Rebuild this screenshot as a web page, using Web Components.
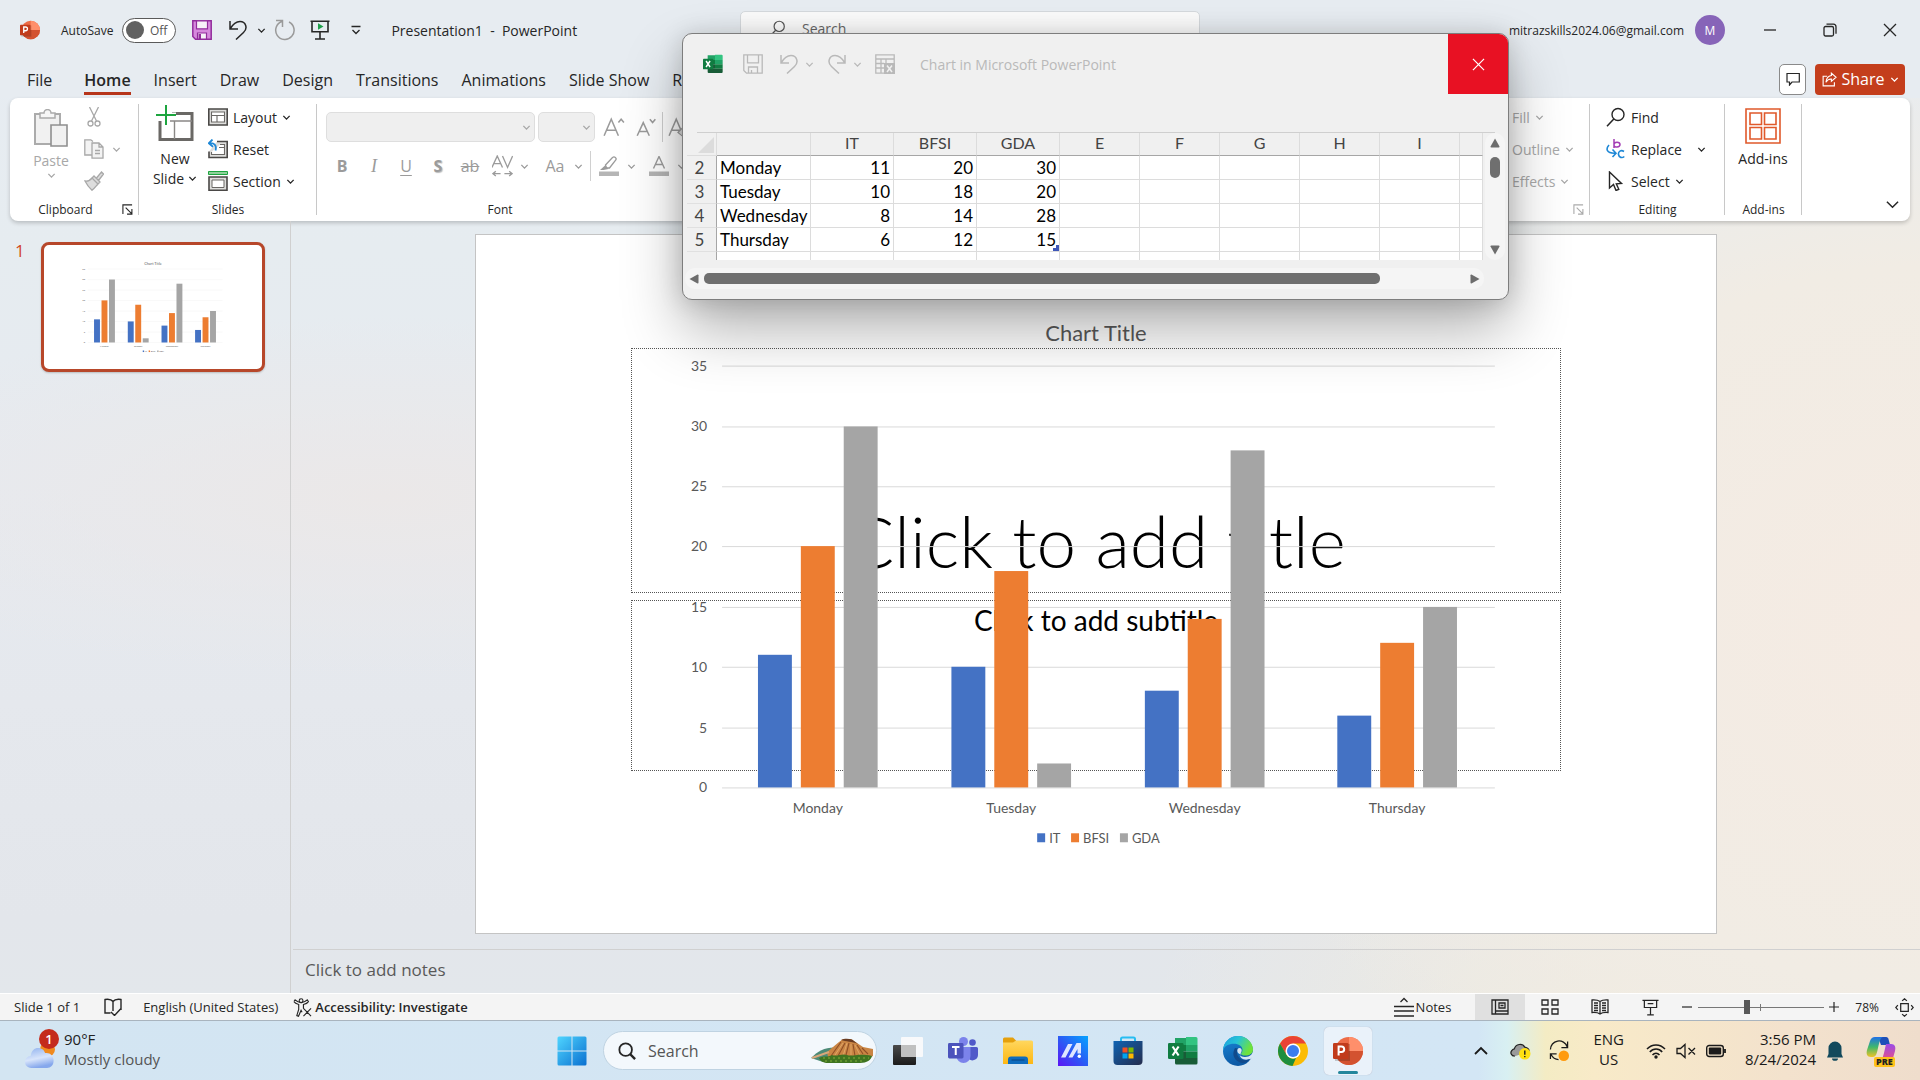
<!DOCTYPE html>
<html lang="en">
<head>
<meta charset="utf-8">
<title>Presentation1 - PowerPoint</title>
<style>
html,body{margin:0;height:100%;overflow:hidden}
body{font-family:"Open Sans","Noto Sans",sans-serif;font-size:14px;color:#262626}
</style>
</head>
<body>
<desk-top></desk-top>
<script>
const BASE = `*{box-sizing:border-box}
button,input,select{font:inherit;color:inherit;background:none;border:0;padding:0;margin:0;outline:0}
button{display:flex;align-items:center;justify-content:center;white-space:nowrap}
.row{display:flex;align-items:center}`;
function define(name, css, html) {
  customElements.define(name, class extends HTMLElement {
    constructor() {
      super();
      this.attachShadow({mode: 'open'});
    }
    connectedCallback() {
      const body = typeof html === 'function' ? html(this) : html;
      this.shadowRoot.innerHTML = `<style>${BASE}${css}</style>${body}`;
    }
  });
}

/* ---------- icons: [viewBox, markup] ---------- */
const S = 'fill="none" stroke="currentColor"';
const ICONS = {
  chev: ['0 0 10 10', `<path ${S} stroke-width="1.5" d="M1.5 3.2 5 6.8 8.5 3.2"/>`],
  chevUp: ['0 0 14 14', `<path ${S} stroke-width="1.8" d="M1 10 7 4l6 6"/>`],
  chevBig: ['0 0 14 14', `<path ${S} stroke-width="1.6" d="M1 4l6 6 6-6"/>`],
  ppt: ['0 0 30 30', `<circle cx="16" cy="15" r="14" fill="#ed6c47"/><path d="M16 1a14 14 0 0 1 14 14H16z" fill="#ff8f6b"/><path d="M2 15h28a14 14 0 0 1-28 0z" fill="#d35230"/><rect x="2" y="8" width="15" height="17" fill="#000" opacity=".18"/><rect x="0" y="7" width="15.500" height="16" rx="1.300" fill="#c13b1b"/><path fill="none" stroke="#fff" stroke-width="2" d="M5.600 19.500v-9h2.800a2.800 2.800 0 0 1 0 5.600H5.600"/>`],
  excel: ['0 0 30 30', `<path d="M7 2h11v7H7z" fill="#21a366"/><path d="M18 1h10a1.500 1.500 0 0 1 1.500 1.500V9H18z" fill="#33c481"/><path d="M7 9h11v6.500H7z" fill="#107c41"/><path d="M18 9h11.500v6.500H18z" fill="#21a366"/><path d="M7 15.500h11V22H7z" fill="#185c37"/><path d="M18 15.500h11.500V22H18z" fill="#107c41"/><path d="M7 22h22.500v5a1.500 1.500 0 0 1-1.500 1.500H8.500A1.500 1.500 0 0 1 7 27z" fill="#185c37"/><rect x="0" y="7" width="15.500" height="16" rx="1.300" fill="#107c41"/><path stroke="#fff" stroke-width="2.200" d="M4.600 10.500l6 9M10.600 10.500l-6 9"/>`],
  save: ['0 0 20 20', `<path fill="#d689dd" stroke="#922c9c" stroke-width="1.500" d="M.8.800h18.400v18.400H3.500L.8 16.500z"/><path fill="#f7f1f8" stroke="#922c9c" stroke-width="1.200" d="M4.500.800h11v8h-11zM5.500 13h9v6h-9z"/><path fill="#922c9c" d="M6.500 14h2.500v5H6.500z"/>`],
  saveOff: ['0 0 20 20', `<path ${S} stroke-width="1.300" d="M.8.800h18.400v18.400H3.500L.8 16.500zM4.500.800h11v8h-11zM5.500 19v-6h9v6M8.500 16v3"/>`],
  undo: ['0 0 20 20', `<path ${S} stroke-width="1.500" d="M2 1v8h8M2 9C5 4 8 1.500 12 1.500c6 0 8 7 3.500 11L8 19.500"/>`],
  redo: ['0 0 20 20', `<path ${S} stroke-width="1.500" d="M18 1v8h-8M18 9C15 4 12 1.500 8 1.500c-6 0-8 7-3.500 11L12 19.500"/>`],
  repeat: ['0 0 22 22', `<path ${S} stroke-width="1.500" d="M3 1.500h6.500V8M9 2.500A9.200 9.200 0 1 0 16 3"/>`],
  present: ['0 0 20 20', `<path ${S} stroke-width="1.600" d="M.5 1.200h19M2 1.200v10.500h16V1.200M10 12v7M5 19h10"/><path fill="#1d9f49" d="M8 3.200 13.500 6.400 8 9.700z"/>`],
  custom: ['0 0 10 10', `<path ${S} stroke-width="1.300" d="M.5 1.500h9M1.500 5 5 8.500 8.500 5"/>`],
  mag: ['0 0 20 20', `<circle cx="12" cy="7.500" r="6" ${S} stroke-width="1.400"/><path ${S} stroke-width="1.500" d="M7.800 12 1 19.300"/>`],
  magR: ['0 0 20 20', `<circle cx="8.500" cy="8.500" r="7" ${S} stroke-width="2"/><path ${S} stroke-width="2.600" d="M13.500 13.500 19 19"/>`],
  min: ['0 0 14 14', `<path ${S} stroke-width="1.300" d="M1 7h12"/>`],
  restore: ['0 0 14 14', `<rect x="1" y="3.500" width="9.500" height="9.500" rx="1.500" ${S} stroke-width="1.300"/><path ${S} stroke-width="1.300" d="M3.500 1.200h7a2.700 2.700 0 0 1 2.500 2.500v7"/>`],
  close: ['0 0 14 14', `<path ${S} stroke-width="1.300" d="M1 1l12 12M13 1 1 13"/>`],
  comment: ['0 0 14 14', `<path ${S} stroke-width="1.200" d="M1 1.500h12.300v8.500H6l-2.500 3V10H1z"/>`],
  share: ['0 0 16 16', `<path ${S} stroke-width="1.200" d="M5.500 4.500H1.200v10.300h12V11"/><path ${S} stroke-width="1.200" d="M10 1.200 15 5.600l-5 4.400V7.500C7.500 7.300 5.500 8.500 4.200 11 4.500 7 6.500 4.300 10 3.800z"/>`],
  paste: ['0 0 34 38', `<path fill="#f1f1f1" stroke="#ababab" stroke-width="2" d="M17 35H1V5h5M21 5h5v11"/><path fill="#f1f1f1" d="M2 6h23v9h-8v19H2z"/><path fill="#f6f6f6" stroke="#ababab" stroke-width="1.500" d="M6 4h4a3.500 3.500 0 0 1 7 0h4v5H6z"/><path fill="#f1f1f1" stroke="#8f8f8f" stroke-width="1.600" d="M17 16h16v21H17z"/>`],
  cut: ['0 0 20 20', `<path ${S} stroke-width="1.300" d="M5.500 0 12.500 14M14.500 0 7.500 14"/><circle cx="6.500" cy="16.500" r="2.500" ${S} stroke-width="1.300"/><circle cx="13.500" cy="16.500" r="2.500" ${S} stroke-width="1.300"/>`],
  copy: ['0 0 20 20', `<path fill="#f3f3f3" stroke="currentColor" stroke-width="1.300" d="M8 16H.8V.800h6L9 2.500"/><path fill="#f3f3f3" stroke="currentColor" stroke-width="1.300" d="M8 4h7l4 4v11.200H8zM15 4v4h4M11 11.500h5M11 14.500h5"/>`],
  painter: ['0 0 20 20', `<path fill="#ddd" stroke="currentColor" stroke-width="1.300" d="M1 10c3 .5 5-.5 7-3l6 6c-2 2-3 4-6 6.300C5.500 17 3 14 1 10zM8 7l2-2 6 6-2 2M12.500 7 17.500 1l2 2-5 6.500"/>`],
  launch: ['0 0 12 12', `<path ${S} stroke-width="1.200" d="M1 11V1h10M4 4l6.500 6.500M10.800 5.500V11H5.500"/>`],
  newSlide: ['0 0 38 36', `<path fill="#fff" stroke="#6a6865" stroke-width="3" d="M16 8.500h20v26H4V16"/><path fill="none" stroke="#8a8886" stroke-width="1.400" d="M14 16h22M18.500 16v18"/><path stroke="#fff" stroke-width="5" d="M0 10h20M10 0v20"/><path fill="none" stroke="#1da53f" stroke-width="2" d="M0 10h20M10 0v20"/>`],
  layout: ['0 0 20 18', `<path fill="#dededc" stroke="#4a4846" stroke-width="1.600" d="M.8 1h18.400v16H.8z"/><path fill="#fff" stroke="#6a6865" stroke-width="1.100" d="M3.500 4h13v10h-13zM3.500 7.500h13M9 7.500V14"/>`],
  reset: ['0 0 20 20', `<path fill="#dededc" stroke="#4a4846" stroke-width="1.600" d="M9 2.500h10.200v16H1v-6"/><path fill="#fff" stroke="#6a6865" stroke-width="1.100" d="M12 5.500h4.500v10h-13V13M11 8.500h5"/><path fill="none" stroke="#1d87d6" stroke-width="1.800" d="M4.500.500.8 4.300 5 7.700M1.200 4.300C6 3.500 9 6 7.500 11.500"/>`],
  section: ['0 0 20 20', `<path fill="#8fd09b" stroke="#1da53f" d="M.5.500h19v3H.5z"/><path fill="#dededc" stroke="#4a4846" stroke-width="1.600" d="M1 6h18v13.200H1z"/><path fill="#fff" stroke="#6a6865" d="M4 9h12v7.500H4z"/>`],
  hilite: ['0 0 20 20', `<path ${S} stroke-width="1.300" d="M6.500 9 13.500 1.500c2-1.500 4.500.5 3.300 2.500L10.500 12H7.500z"/><path fill="currentColor" d="M6 9.500 9.500 13l-5 1H1z"/><path fill="#b5b5b5" d="M0 15.500h20V20H0z"/>`],
  fontCol: ['0 0 20 20', `<path ${S} stroke-width="1.400" d="M4.500 12.500 10 .500l5.500 12M6.500 8.500h7"/><path fill="#b5b5b5" d="M0 15.500h20V20H0z"/>`],
  growA: ['0 0 20 20', `<path ${S} stroke-width="1.400" d="M1 18 7.500 3 14 18M3.200 13h8.600M14 6l2.500-3L19 6"/>`],
  shrinkA: ['0 0 20 20', `<path ${S} stroke-width="1.400" d="M2 18 7.500 6 13 18M4 14h7M13.500 3l2.500 3 2.500-3"/>`],
  clearA: ['0 0 20 20', `<path ${S} stroke-width="1.400" d="M1 18 7.500 3 14 18M3.200 13h8.600"/><path fill="#ddd" stroke="currentColor" d="m9 15 5-5 5 5-5 4z"/>`],
  spacingA: ['0 0 22 24', `<path ${S} stroke-width="1.400" d="M0 13 5.500 1 11 13M2 9h7M11 1l5.300 12L21.600 1M1 19.500h8M4 17l-3 2.500L4 22M13 19.500h8M18 17l3 2.500-3 2.500"/>`],
  repl: ['0 0 20 20', `<path fill="none" stroke="#a33fb5" stroke-width="1.500" d="M8 0v9M8 5.500c0-3 6-3 6 0s-6 3.500-6 .5"/><path fill="none" stroke="#1d87d6" stroke-width="1.600" d="M3 6c-3.500 4-2.500 8.500 6 8.300M6.500 10.500 10 14.300 6.500 18M18 12.500c-3-2-6 0-5.500 3s3.500 4 5.800 2"/>`],
  arrow: ['0 0 20 20', `<path ${S} stroke-width="1.400" d="M3.500 1v16l4-3.500 2.500 6 2.800-1.200-2.500-5.500 5.200-.300z"/>`],
  addins: ['0 0 36 36', `<path fill="none" stroke="#e0592b" stroke-width="1.600" d="M1 1h34v34H1zM5 5h11.500v11.500H5zM19.500 5H31v11.500H19.500zM5 19.500h11.500V31H5zM19.500 19.500H31V31H19.500z"/>`],
  book: ['0 0 18 18', `<path ${S} stroke-width="1.400" d="M9 3.500V13M9 3.500C7.500 1.500 4 1 1 1.500V15h5.500M9 3.500c1.500-2 5-2.500 8-2V12M7 14l3.500 3.500L17 10.500"/>`],
  access: ['0 0 20 20', `<circle cx="8.500" cy="2.800" r="2" ${S} stroke-width="1.200"/><path ${S} stroke-width="1.200" d="M1 3.800c1 1.700 3 2.500 5 3V12L4 18.500l1.800.7L8.500 13l1 2M1 3.800 2.200 2c2 2 4 2.800 6.300 2.800S13 4 15 2l1.200 1.800c-1 1.700-3 2.500-5.200 3V11M11 11l8 8M19 11l-8 8"/>`],
  notes: ['0 0 20 20', `<path ${S} stroke-width="1.300" d="M0 9.500h20M0 14h20M0 19h20M6.500 5 10 1.500 13.500 5"/>`],
  normal: ['0 0 18 16', `<path ${S} stroke-width="1.300" d="M1 1h16v14H1zM4.500 1v14M4.500 12H17M8 4h6v5H8zM9.500 6.500h3"/>`],
  sorter: ['0 0 18 16', `<path ${S} stroke-width="1.300" d="M1 1h6v5H1zM11 1h6v5h-6zM1 10h6v5H1zM11 10h6v5h-6z"/>`],
  reading: ['0 0 18 16', `<path ${S} stroke-width="1.300" d="M9 2.500V15M9 2.500C7 1 4 .800 1 1v12.500c3-.2 6 0 8 1.500 2-1.500 5-1.700 8-1.500V1c-3-.2-6 0-8 1.500M3 4h4M3 6.500h4M3 9h4M3 11.500h4M11 4h4M11 6.500h4M11 9h4M11 11.500h4"/>`],
  show: ['0 0 18 18', `<path ${S} stroke-width="1.300" d="M.5 1.500h17M2.500 1.500V9h13V1.500M6 5h6M9 9v7.500M5.500 16.700h7"/>`],
  fit: ['0 0 20 20', `<path ${S} stroke-width="1.300" d="M6 6h8v8H6zM7.500 3 10 .800 12.500 3M7.500 17l2.500 2.200 2.500-2.200M3 7.500.800 10 3 12.500M17 7.500l2.200 2.500-2.200 2.500"/>`],
  minus: ['0 0 10 10', `<path ${S} stroke-width="1.200" d="M0 5h10"/>`],
  plus: ['0 0 10 10', `<path ${S} stroke-width="1.200" d="M0 5h10M5 0v10"/>`],
  sheetX: ['0 0 20 20', `<path ${S} stroke-width="1.300" d="M9 19.200H.8V.800h18.400V9M.8 5h18.400M6 5v14M.8 9.500H9M.8 14H9M11 5v4"/><path fill="currentColor" d="M9 9h11v11H9z"/><path stroke="#f0f0f0" stroke-width="1.500" d="m12 11.500 5 6.500M17 11.500 12 18"/>`],
  tri: ['0 0 10 10', `<path fill="#6d6d6d" d="M5 .5 9.500 8.500Q9.600 9.500 8.700 9.500H1.300Q.4 9.500.5 8.500z"/>`],
  corner: ['0 0 16 16', `<path fill="#dcdcdc" d="M16 0v16H0z"/>`],
  win: ['0 0 30 30', `<linearGradient id="g" x2="1" y2="1"><stop stop-color="#4fd5ff"/><stop offset="1" stop-color="#0a70d0"/></linearGradient><path fill="url(#g)" d="M2 .500h12.500v14H.5V2A1.500 1.500 0 0 1 2 .500zM15.500.500H28A1.500 1.500 0 0 1 29.500 2v12.500h-14zM.5 15.500h14v14H2A1.500 1.500 0 0 1 .5 28zM15.500 15.500h14V28a1.500 1.500 0 0 1-1.500 1.500H15.500z"/>`],
  weather: ['0 0 32 32', `<linearGradient id="g" x2=".3" y2="1"><stop stop-color="#8fb1ee"/><stop offset=".6" stop-color="#d8e5fb"/><stop offset="1" stop-color="#86a8ec"/></linearGradient><circle cx="24" cy="11" r="8" fill="#f08a1d"/><path fill="url(#g)" d="M7 31a6.500 6.500 0 0 1-1-13c1-6 4-8.500 8-8.500 4.500 0 6.500 2.500 7.500 5.500 5-1 9 3 9 8 0 5-3 8-7 8z"/>`],
  taskview: ['0 0 30 30', `<linearGradient id="g" x2="0" y2="1"><stop stop-color="#4a4a4a"/><stop offset="1" stop-color="#1b1b1b"/></linearGradient><rect x="0" y="9" width="23" height="20" rx="1" fill="url(#g)"/><rect x="8" y="1" width="22" height="20" rx="1" fill="#fbfbfb" opacity=".92"/><path fill="#a9a9a9" opacity=".65" d="M8 9h15v12H8z"/>`],
  teams: ['0 0 30 30', `<circle cx="24.500" cy="6.500" r="3.300" fill="#5059c9"/><path fill="#5059c9" d="M20 11h8.500a1.500 1.500 0 0 1 1.500 1.500V19a5.500 5.500 0 0 1-10 3z"/><circle cx="15.500" cy="5.500" r="4.500" fill="#7b83eb"/><path fill="#7b83eb" d="M9 11h13.500v9a7 7 0 0 1-14 0z"/><rect y="7" width="15.500" height="15.500" rx="1.400" fill="#4b53bc"/><path stroke="#fff" stroke-width="2" d="M4 11h7.500M7.750 11v8"/>`],
  folder: ['0 0 30 30', `<path fill="#e5a00d" d="M0 3a1.500 1.500 0 0 1 1.500-1.500H10l3 3V9H0z"/><linearGradient id="g" x2="0" y2="1"><stop stop-color="#ffd75e"/><stop offset="1" stop-color="#fdb714"/></linearGradient><path fill="url(#g)" d="M0 6.500h10l3-2h15.500A1.500 1.500 0 0 1 30 6v22H0z"/><path fill="#0f6cbd" d="M5 28v-4.500a3 3 0 0 1 3-3h14a3 3 0 0 1 3 3V28z"/><path stroke="#0a4a8a" stroke-width="1.200" d="M8.500 24h13"/>`],
  asus: ['0 0 30 30', `<linearGradient id="g" y1="1" x2="1" y2="0"><stop stop-color="#5c14f5"/><stop offset=".5" stop-color="#2a5cf5"/><stop offset="1" stop-color="#06a4ff"/></linearGradient><path fill="url(#g)" d="M0 0h30v30H0z"/><path fill="#dfe6ff" d="M3 21.500 10 8h4.500L7.500 21.500zM10.500 21.500 18.500 7h4.500v10.500h-3.500V13l-5 8.500z"/><circle cx="21.300" cy="20.300" r="1.700" fill="#fff"/>`],
  store: ['0 0 30 30', `<linearGradient id="g" x2="1" y2="1"><stop stop-color="#0f63b3"/><stop offset="1" stop-color="#252d4d"/></linearGradient><path fill="none" stroke="#28bdf2" stroke-width="2" d="M8 8V3a1.500 1.500 0 0 1 1.500-1.500h11A1.500 1.500 0 0 1 22 3v5"/><path fill="url(#g)" d="M.5 5h29v20a4 4 0 0 1-4 4h-21a4 4 0 0 1-4-4z"/><path fill="#f25022" d="M9.500 11.500h5v5h-5z"/><path fill="#7fba00" d="M15.500 11.500h5v5h-5z"/><path fill="#00a4ef" d="M9.500 17.500h5v5h-5z"/><path fill="#ffb900" d="M15.500 17.500h5v5h-5z"/>`],
  edge: ['0 0 30 30', `<linearGradient id="g" x2="1" y2=".4"><stop stop-color="#1c9de0"/><stop offset=".5" stop-color="#27c4d6"/><stop offset="1" stop-color="#6fe23a"/></linearGradient><linearGradient id="h" x2=".3" y2="1"><stop stop-color="#1a86d9"/><stop offset="1" stop-color="#0c59a4"/></linearGradient><circle cx="15" cy="15" r="15" fill="url(#h)"/><path fill="#d7e7f4" d="M30 14c0 4-3 7-8 7-3 0-5-1-5.500-2.500 1 4 4 6.500 11 4.500L31 20z"/><path fill="url(#g)" d="M0 15C0 6 7 0 15 0s15 6 15 13.500c0 4-3.500 6-7.500 6-3 0-4.500-.8-4.500-1.800 0-1 1.500-1.500 1.500-4 0-3.500-4-6-8.500-6C5.500 7.700 1 10 0 15z"/><path fill="#114a8b" d="M12 12c-3 5-2 11 4 14 4 2 8 1 11-3-4 2-9 1.500-11.500-2C13.500 18 13.500 15 15 12.500z"/><path fill="#d7e7f4" d="M15 12.500c2-1.500 4.500.3 3.500 3-.6 1.500-1.500 2-.3 3-3-.5-5-3-3.200-6z"/>`],
  chrome: ['0 0 30 30', `<circle cx="15" cy="15" r="15" fill="#fbbc04"/><path fill="#ea4335" d="M15 0A15 15 0 0 0 2 7.500l6.500 11.200L15 7.500h13A15 15 0 0 0 15 0z"/><path fill="#1e8e3e" d="M2 7.500 8.500 18.800A7.500 7.500 0 0 0 18 22L14.500 30A15 15 0 0 1 2 7.500z"/><circle cx="15" cy="15" r="7.500" fill="#fff"/><circle cx="15" cy="15" r="6" fill="#3b7ded"/>`],
  volcano: ['0 0 62 26', `<path fill="#4c8a76" d="M0 20C8 12 16 8 30 10l4 14H12z"/><path fill="#c98544" d="M16 14 28 4 32 1h8l12 8 10 2v7L48 24H18z"/><path fill="#6a3c22" d="M30 2c3-1.500 7-1.500 11-.5L47 6C41 3 35 4 30 2z"/><path stroke="#8f4f26" stroke-width="1.100" fill="none" d="M30 4 20 18M34 5l-7 13M38 5l-3 12M42 6l2 12M46 7l6 9M51 10l6 6"/><path stroke="#e0a667" fill="none" d="M32 5 24 17M36 5l-4 13M40 6v11M44 7l5 10"/><path fill="#3f7420" d="M8 20c5-3 9 0 13-3 5 2 10-2 15 0s12-2 25 1c-1 4-5 7-12 7H17c-4 0-8-2-9-5z"/><path stroke="#6f9a32" stroke-dasharray="2 3" stroke-width="1.500" fill="none" d="M12 20h46M14 23h40"/><path stroke="#d8a77a" stroke-width="2" fill="none" d="M1 20 18 14"/>`],
  cloud: ['0 0 22 22', `<path fill="#9a9a9a" stroke="#222" stroke-width="1.300" d="M5 17C1 17 0 13 2 11c.5-1 1.500-1.500 2.500-1.700C6 4 13 3 15.500 7.500 18 8 20 10 20 12"/><circle cx="15.500" cy="14.500" r="6" fill="#ffe112"/><path stroke="#222" stroke-width="1.500" d="M15.500 11v4.500M15.500 16.700v1.500"/>`],
  sync: ['0 0 22 22', `<path ${S} stroke-width="1.300" d="M1.500 10A9 9 0 0 1 19 7M19.500 1.500V8H13M1.500 20v-5.500H8M2 15c1.500 3 4 5.500 8 5.500"/><circle cx="15.500" cy="16.500" r="5.500" fill="#ff9a0d"/>`],
  wifi: ['0 0 20 16', `<path ${S} stroke-width="1.500" d="M1 6c5-5.500 13-5.500 18 0M3.800 9c3.500-4 9-4 12.400 0M6.500 12c2-2.400 5-2.400 7 0"/><circle cx="10" cy="14" r="1.700" fill="currentColor"/>`],
  mute: ['0 0 20 16', `<path ${S} stroke-width="1.300" d="M1 5.500h3.500L9 1.500v13L4.500 10.500H1zM12.500 5l6.500 6.500M19 5l-6.500 6.500"/>`],
  battery: ['0 0 20 14', `<rect x=".7" y="1.500" width="16.600" height="11" rx="2.500" ${S} stroke-width="1.400"/><rect x="2.800" y="3.600" width="12.400" height="6.800" rx="1" fill="currentColor"/><path stroke="currentColor" stroke-width="1.800" d="M19 5v4"/>`],
  bell: ['0 0 16 20', `<path fill="#12495c" d="M8 .500a6.500 6.500 0 0 1 6.500 6.500v6L16 16.500H0L1.500 13V7A6.500 6.500 0 0 1 8 .500zM5 17.500h6a3 2.300 0 0 1-6 0z"/>`],
  copilot: ['0 0 30 30', `<linearGradient id="g" x2="0" y2="1"><stop stop-color="#1f6fe8"/><stop offset=".5" stop-color="#3fb86b"/><stop offset="1" stop-color="#f0c325"/></linearGradient><linearGradient id="h" x2="0" y2="1"><stop stop-color="#9a4be8"/><stop offset="1" stop-color="#f0527a"/></linearGradient><path fill="#1d4fb8" d="M12 1h8c2 0 2.500 2 3 4l1 4h-9z"/><path fill="url(#g)" d="M9 1h8c-3 1-3.500 5-5 11-1 5-2 9-5 9H5c-4 0-5-3-4-7L4 5c1-2.500 2.500-4 5-4z"/><path fill="url(#h)" d="M20 8h5c4 0 5 3 4 7l-2 7c-1 3-2.500 4-5 4h-9c3-1 3.500-4 5-9z"/>`]
};
define('ui-icon', ':host{display:inline-flex;flex:none}svg{display:block}', el => {
  const [vb, m] = ICONS[el.getAttribute('name')];
  const w = el.getAttribute('w') || 20, [, , a, b] = vb.split(' ').map(Number);
  return `<svg width="${w}" height="${Math.round(w * b / a)}" viewBox="${vb}" aria-hidden="true">${m}</svg>`;
});
const icon = (n, w = 20) => `<ui-icon name="${n}" w="${w}"></ui-icon>`;

/* ---------- title bar ---------- */
define('title-bar', `:host{display:grid;grid-template-columns:1fr 460px 1fr;height:60px;padding-left:20px;font-size:12px}
.left button{width:36px;height:36px}.left .c{width:10px}
.as{margin:0 9px 0 21px}
.left .tog{display:flex;align-items:center;width:54px;height:25px;border:1px solid #5a5a5a;border-radius:13px;background:#fff;padding:0 8px 0 3px;justify-content:space-between;color:#555;margin-right:8px}
.tog i{width:18px;height:18px;border-radius:9px;background:#616161}
h1{font-size:14px;font-weight:400;margin:0 0 0 17px;white-space:pre}
.dim{color:#9a9a9a}
.search{align-self:start;margin-top:11px;height:36px;background:#fbfbfb;border:1px solid #d5d9dd;border-radius:5px;gap:16px;padding:0 0 2px 28px;color:#555}
input{font-size:14px;width:200px}input::placeholder{color:#666;opacity:1}
.right{justify-content:flex-end}.right button{width:60px;height:60px}
.av{width:30px;height:30px;border-radius:15px;background:#8764b8;color:#fff;display:grid;place-items:center;margin:0 15px 0 11px}`,
`<div class="row left">${icon('ppt', 20)}<span class="as">AutoSave</span><button class="tog" role="switch" aria-checked="false" aria-label="AutoSave"><i></i><span>Off</span></button>
<button aria-label="Save">${icon('save')}</button><button aria-label="Undo">${icon('undo')}</button><button class="c" aria-label="Undo list">${icon('chev', 9)}</button><button class="dim" aria-label="Repeat">${icon('repeat', 22)}</button><button aria-label="Start show">${icon('present')}</button><button aria-label="Customize toolbar">${icon('custom', 10)}</button><h1>Presentation1  -  PowerPoint</h1></div>
<label class="row search">${icon('mag', 17)}<input type="search" placeholder="Search" aria-label="Search"></label>
<div class="row right"><span>mitrazskills2024.06@gmail.com</span><span class="av">M</span><button aria-label="Minimize">${icon('min', 14)}</button><button aria-label="Restore">${icon('restore', 14)}</button><button aria-label="Close">${icon('close', 14)}</button></div>`);

/* ---------- ribbon tabs ---------- */
define('ribbon-tabs', `:host{display:flex;height:38px;justify-content:space-between;padding:0 15px 0 16px;font-size:16px}
nav{display:flex;gap:1px}nav button{padding:2px 11px 0}nav button:first-child{margin-right:9px}
nav .on{font-weight:600;background:linear-gradient(#b7351a,#b7351a) center 32px/calc(100% - 22px) 3px no-repeat}
.act{gap:9px}.cm{width:27px;height:31px;border:1px solid #8a8a8a;border-radius:5px;background:#fff}
.sh{width:90px;height:31px;background:#c43e1c;color:#fff;border-radius:4px;gap:5px}`,
`<nav>${['File', 'Home', 'Insert', 'Draw', 'Design', 'Transitions', 'Animations', 'Slide Show', 'Record'].map(t => `<button class="${t === 'Home' ? 'on' : ''}">${t}</button>`).join('')}</nav>
<div class="row act"><button class="cm" aria-label="Comments">${icon('comment', 14)}</button><button class="sh">${icon('share', 15)}<span>Share</span>${icon('chev', 9)}</button></div>`);

/* ---------- ribbon ---------- */
define('ribbon-group', `:host{display:grid;grid-template-rows:96px 24px;padding-top:3px;background:linear-gradient(#c8c8c8,#c8c8c8) right 6px/1px 111px no-repeat}
:host([open]){background:none}
.f{display:flex;align-items:center;justify-content:center;font-size:12px}
.f:has(button){display:grid;grid-template-columns:1fr 18px;justify-items:center}.f button{padding-right:5px}
:host([off]) button{color:#aaa}
.b{display:flex;min-width:0}`, el => `<div class="b"><slot></slot></div><div class="f"><span>${el.getAttribute('label') || ''}</span>${el.hasAttribute('launcher') ? `<button aria-label="More options">${icon('launch', 11)}</button>` : ''}</div>`);
define('ribbon-bar', `:host{display:flex;height:123px;margin:0 10px;background:#fff;border-radius:8px;box-shadow:0 2px 4px rgba(0,0,0,.2)}
.off{color:#a8a8a8}
.col{display:grid;grid-template-rows:repeat(3,32px)}
.col button{justify-content:flex-start;gap:5px}
.big{flex-direction:column;justify-content:flex-start;line-height:20px;width:60px}
.big ui-icon{margin-bottom:2px}.big span{display:flex;align-items:center;gap:4px}
.clip{width:129px}.clip .big{width:62px}.sl{width:178px}.font{width:366px}.dr{width:96px}.ed{width:135px}.ad{width:77px}
.push{flex:1}.end{width:108px;display:flex;align-items:flex-end;justify-content:flex-end;padding:0 11px 10px}
.fonts{padding-left:9px;width:100%}.fr{display:flex;align-items:center;height:30px;margin-top:11px;overflow:hidden}
.fr+.fr{margin-top:9px}
.combo{position:relative;flex:none;height:30px;border:1px solid #dedede;border-radius:5px;background:#efefef;margin-right:3px;display:flex;align-items:center;justify-content:flex-end;padding-right:3px}
.combo select{position:absolute;inset:0;appearance:none;width:100%}
.fr button{width:32px;height:30px;font-size:16px;color:#9b9b9b;flex:none}.fr .n{width:12px}
.fr u{text-underline-offset:3px}.fr .v{width:1px;height:30px;background:#d0d0d0;flex:none}
.fr .i{font-family:"Liberation Serif",serif;font-size:18px}.fr .sd{text-shadow:1px 1px 1px #bbb}`,
`<ribbon-group class="clip" label="Clipboard" launcher><div class="row off" style="align-items:flex-start;padding-left:10px">
<button class="big off" style="padding-top:8px">${icon('paste', 34)}<span style="margin-top:2px">Paste</span>${icon('chev', 9)}</button>
<div class="col" style="margin-left:2px"><button aria-label="Cut">${icon('cut')}</button><button aria-label="Copy" style="gap:8px">${icon('copy')}${icon('chev', 9)}</button><button aria-label="Format painter">${icon('painter')}</button></div></div></ribbon-group>
<ribbon-group class="sl" label="Slides"><div class="row" style="align-items:flex-start;padding-left:6px">
<button class="big" style="padding-top:4px">${icon('newSlide', 38)}<span style="margin-top:6px">New</span><span>Slide ${icon('chev', 9)}</span></button>
<div class="col" style="margin-left:3px"><button>${icon('layout')}Layout ${icon('chev', 9)}</button><button>${icon('reset')}Reset</button><button>${icon('section')}Section ${icon('chev', 9)}</button></div></div></ribbon-group>
<ribbon-group class="font" label="Font" open><div class="fonts"><div class="fr"><div class="combo off" style="width:209px"><select aria-label="Font"></select>${icon('chev', 9)}</div><div class="combo off" style="width:57px"><select aria-label="Font size"></select>${icon('chev', 9)}</div>
<button aria-label="Grow font">${icon('growA', 22)}</button><button aria-label="Shrink font">${icon('shrinkA', 22)}</button><span class="v"></span><button aria-label="Clear formatting">${icon('clearA', 22)}</button></div>
<div class="fr"><button><b>B</b></button><button class="i"><i>I</i></button><button><u>U</u></button><button class="sd"><b>S</b></button><button><s>ab</s></button><button aria-label="Spacing">${icon('spacingA', 21)}</button><button class="n" aria-label="Spacing list">${icon('chev', 9)}</button><button style="width:42px;padding-left:8px">Aa</button><button class="n" aria-label="Case list">${icon('chev', 9)}</button><span class="v" style="margin:0 2px 0 6px"></span><button aria-label="Highlight">${icon('hilite')}</button><button class="n" aria-label="Highlight list">${icon('chev', 9)}</button><button style="margin-left:6px" aria-label="Font color">${icon('fontCol')}</button><button class="n" aria-label="Font color list">${icon('chev', 9)}</button></div></div></ribbon-group>
<div class="push"></div>
<ribbon-group class="dr" launcher off><div class="col off" style="padding-left:18px"><button>Fill ${icon('chev', 9)}</button><button>Outline ${icon('chev', 9)}</button><button>Effects ${icon('chev', 9)}</button></div></ribbon-group>
<ribbon-group class="ed" label="Editing"><div class="col" style="padding-left:16px"><button>${icon('mag')}Find</button><button>${icon('repl')}Replace<span></span><span></span>${icon('chev', 9)}</button><button>${icon('arrow')}Select ${icon('chev', 9)}</button></div></ribbon-group>
<ribbon-group class="ad" label="Add-ins"><button class="big" style="width:76px;padding-top:7px">${icon('addins', 36)}<span style="margin-top:3px">Add-ins</span></button></ribbon-group>
<div class="end"><button aria-label="Collapse ribbon">${icon('chevBig', 13)}</button></div>`);

/* ---------- chart ---------- */
const DATA = [['Monday', 11, 20, 30], ['Tuesday', 10, 18, 2], ['Wednesday', 8, 14, 28], ['Thursday', 6, 12, 15]];
const COLORS = ['#4472c4', '#ed7d31', '#a5a5a5'];
define('bar-chart', ':host{display:block}svg{display:block;width:100%;height:100%;font-family:Lato,sans-serif}text{fill:#595959;font-size:14px}.lg{font-size:13px}.ti{font-size:22px}', () => {
  let s = '';
  for (let v = 0; v <= 35; v += 5) {
    const y = 554 - Math.round(v * 12.08);
    s += `<path d="M246 ${y + .5}H1021" stroke="#d9d9d9"/><text x="231" y="${y + 5}" text-anchor="end">${v}</text>`;
  }
  DATA.forEach(([d, ...vals], i) => {
    const c = 342 + Math.round(i * 193.8);
    vals.forEach((v, k) => { const h = Math.round(v * 12.08); s += `<rect x="${c - 60 + k * 43}" y="${554 - h}" width="34" height="${h}" fill="${COLORS[k]}"/>`; });
    s += `<text x="${c}" y="580" text-anchor="middle">${d}</text>`;
  });
  [['IT', 562], ['BFSI', 596], ['GDA', 645]].forEach(([t, x], k) => { s += `<rect x="${x}" y="600" width="8" height="9" fill="${COLORS[k]}"/><text class="lg" x="${x + 12}" y="610">${t}</text>`; });
  return `<svg viewBox="0 0 1242 700" role="img" aria-label="Column chart"><text class="ti" x="621" y="106" text-anchor="middle">Chart Title</text>${s}</svg>`;
});

/* ---------- editor body ---------- */
define('slide-rail', `:host{display:block;width:291px;border-right:1px solid #d0d0d0;padding:21px 0 0 15px}
.r{display:flex;gap:16px;align-items:flex-start;font-size:17px;line-height:17px;color:#d24726}
.t{width:224px;height:130px;border:3px solid #b7472a;border-radius:8px;background:#fff;padding:1px;box-shadow:0 1px 2px rgba(0,0,0,.2)}`,
`<div class="r"><span>1</span><div class="t"><bar-chart style="height:122px"></bar-chart></div></div>`);
define('slide-stage', `:host{flex:1;min-height:0;display:flex;justify-content:center;padding:13px 19px 15px 0}
.s{position:relative;height:100%;aspect-ratio:1242/700;background:#fff;border:1px solid #c4c4c4;font-family:Lato,sans-serif;color:#000}
.p{position:absolute;left:12.5%;width:75%;border:1px dotted #555;text-align:center}
.p1{top:16.200%;height:35.100%;display:flex;align-items:flex-end;justify-content:center;font-size:71px;line-height:84px;padding-bottom:9px;font-weight:300}
.p2{top:52.300%;height:24.500%;font-size:28px;line-height:38px}
bar-chart{position:absolute;inset:0}`,
`<div class="s"><div class="p p1">Click to add title</div><div class="p p2">Click to add subtitle</div><bar-chart></bar-chart></div>`);
define('notes-pane', `:host{display:block;height:44px;border-top:1px solid #d0d0d0;margin-left:2px;padding:0 12px;font-size:17px;line-height:40px;color:#595959}`, `<slot></slot>`);

/* ---------- status bar ---------- */
define('status-bar', `:host{display:flex;justify-content:space-between;height:28px;background:#f4f4f4;border-top:1px solid #fff;border-bottom:1px solid #a9b4be;font-size:13px;padding:0 6px 0 14px}
.row>*{flex:none}.l{gap:21px}.l .ac{gap:3px;margin-left:-6px}.l b{font-weight:600}
.v{width:50px;height:26px}.on{background:#e0e0e0}
.nt{margin-right:24px;gap:2px}
.z{width:126px;height:20px;margin:0 5px 0 6px}
input{appearance:none;width:126px;height:20px;display:block;background:linear-gradient(#777,#777) center/100% 1px no-repeat,linear-gradient(#777,#777) 62px center/1px 7px no-repeat}
input::-webkit-slider-thumb{appearance:none;width:6px;height:14px;background:#595959}
.pc{margin:0 16px;font-size:12px}`,
`<div class="row l"><span>Slide 1 of 1</span><button aria-label="Spelling" style="padding:0 0 0 3px">${icon('book', 18)}</button><button>English (United States)</button><button class="ac">${icon('access', 19)}<b>Accessibility: Investigate</b></button></div>
<div class="row"><button class="nt">${icon('notes')}Notes</button><button class="v on" aria-label="Normal">${icon('normal', 18)}</button><button class="v" aria-label="Slide sorter">${icon('sorter', 18)}</button><button class="v" aria-label="Reading view">${icon('reading', 18)}</button><button class="v" aria-label="Slide show">${icon('show', 17)}</button><button aria-label="Zoom out" style="margin-left:7px">${icon('minus', 10)}</button><div class="z"><input type="range" min="0" max="100" value="38" aria-label="Zoom"></div><button aria-label="Zoom in">${icon('plus', 10)}</button><button class="pc">78%</button><button aria-label="Fit">${icon('fit', 19)}</button></div>`);

/* ---------- taskbar ---------- */
define('task-app', `:host{display:block}button{position:relative;width:48px;height:48px;border-radius:5px}
:host([active]) button{background:#eaf2fa;box-shadow:0 0 1px #aab}
:host([active]) button::after{content:"";position:absolute;left:14px;bottom:1px;width:20px;height:3px;border-radius:2px;background:#24869c}`,
el => `<button aria-label="${el.getAttribute('app')}">${icon(el.getAttribute('app'), 30)}</button>`);
define('task-bar', `:host{display:grid;grid-template-columns:1fr auto 1fr;align-items:center;height:59px;background:linear-gradient(90deg,#d3e5f2 0,#d3e6f5 77%,#d8f0f2 78.500%,#f4ecc4 80.500%,#f8eac8 83%,#f3e2cd 93%,#efddcc)}
.w{gap:9px;padding-left:25px;text-align:left}.wi{position:relative;width:30px;height:44px;padding-bottom:4px;display:flex;align-items:flex-end}
.wi b{position:absolute;left:14px;top:0;width:20px;height:20px;border-radius:10px;background:#c42b1c;color:#fff;font:600 13px/20px "Open Sans",sans-serif;text-align:center}
.w p{margin:0;line-height:20px;color:#222;font-size:15px}.w p+p{color:#555}.w .wt{padding-bottom:4px}
.c{gap:7px}label{width:274px;height:39px;border-radius:20px;background:#f3f8fc;border:1px solid #bfd3e2;padding:0 3px 0 14px;gap:12px}
input{flex:1;min-width:0;font-size:16px}input::placeholder{color:#555;opacity:1}
.r{justify-content:flex-end;padding-right:24px;color:#1a1a1a}.r>*{flex:none}.st{flex-direction:column;line-height:20px;font-size:15px;padding-bottom:3px}
.cp{position:relative}.cp b{position:absolute;left:8px;bottom:-1px;background:#ffc21a;border-radius:2px;padding:0 2px;font:800 9px/10px "Open Sans",sans-serif;color:#222}`,
`<div><button class="w"><span class="wi">${icon('weather', 30)}<b>1</b></span><span class="wt"><p>90°F</p><p>Mostly cloudy</p></span></button></div>
<div class="row c"><task-app app="win"></task-app><label class="row">${icon('magR', 18)}<input type="search" placeholder="Search" aria-label="Search">${icon('volcano', 62)}</label>${['taskview', 'teams', 'folder', 'asus', 'store', 'excel', 'edge', 'chrome'].map(a => `<task-app app="${a}"></task-app>`).join('')}<task-app app="ppt" active></task-app></div>
<div class="row r"><button aria-label="Hidden icons">${icon('chevUp', 14)}</button><button style="margin-left:22px" aria-label="OneDrive">${icon('cloud', 21)}</button><button style="margin-left:18px" aria-label="Update">${icon('sync', 21)}</button><button class="st" style="margin-left:23px"><span>ENG</span><span>US</span></button><button style="margin-left:22px;gap:10px" aria-label="System">${icon('wifi')}${icon('mute')}${icon('battery')}</button><button class="st" style="margin-left:19px;align-items:flex-end"><span>3:56 PM</span><span>8/24/2024</span></button><button style="margin-left:11px" aria-label="Notifications">${icon('bell', 16)}</button><button class="cp" style="margin-left:23px">${icon('copilot', 30)}<b>PRE</b></button></div>`);

/* ---------- embedded worksheet window ---------- */
const ROWS = [[2, 'Monday', 11, 20, 30], [3, 'Tuesday', 10, 18, 20], [4, 'Wednesday', 8, 14, 28], [5, 'Thursday', 6, 12, 15]];
define('sheet-grid', `:host{display:block;height:127px;overflow:hidden;font-family:Lato,sans-serif;font-size:17px;color:#000}
table{border-collapse:separate;border-spacing:0;table-layout:fixed;width:100%;background:#fff}
th{font-weight:400;color:#444;background:#f0f0f0;padding:0}
thead th{height:23px;border-bottom:1px solid #a6a6a6;border-right:1px solid #dcdcdc;line-height:20px;padding-bottom:2px;font-size:16px}
thead th:first-child{text-align:right;border-bottom-color:#ddd}thead ui-icon{margin:4px 2px 0 0;vertical-align:top}
tbody th{border-right:1px solid #a6a6a6;border-bottom:1px solid #e0e0e0;padding-right:4px;line-height:23px}
td{height:24px;border-right:1px solid #dcdcdc;border-bottom:1px solid #dcdcdc;padding:0 3px;text-align:right;line-height:23px;position:relative}
td:nth-child(2){text-align:left}
td i{position:absolute;right:0;bottom:0;width:6px;height:6px;background:#3f57b8;clip-path:polygon(50% 0,100% 0,100% 100%,0 100%,0 50%,50% 50%)}`,
() => `<table><colgroup><col style="width:30px"><col style="width:94px"><col style="width:83px"><col style="width:83px"><col style="width:83px">${'<col style="width:80px">'.repeat(5)}<col></colgroup>
<thead><tr><th>${icon('corner', 16)}</th>${['', 'IT', 'BFSI', 'GDA', 'E', 'F', 'G', 'H', 'I', ''].map(h => `<th>${h}</th>`).join('')}</tr></thead><tbody>
${ROWS.map(r => `<tr><th>${r[0]}</th>${r.slice(1).map((c, i) => `<td>${c}${r[0] === 5 && i === 3 ? '<i></i>' : ''}</td>`).join('')}${'<td></td>'.repeat(6)}</tr>`).join('')}
<tr><th></th>${'<td></td>'.repeat(10)}</tr></tbody></table>`);
define('sheet-window', `:host{position:absolute;left:682px;top:33px;width:827px;height:267px;background:#f0f0f0;border:1px solid #7d7d7d;border-radius:10px;box-shadow:0 30px 60px rgba(0,0,0,.3),0 2px 24px rgba(0,0,0,.16);display:flex;flex-direction:column;overflow:hidden}
header{display:flex;align-items:flex-start;height:98px;padding-left:20px;color:#b9b9b9}
.t{height:60px;flex:1}.t button{width:36px;height:36px}.t .c{width:12px;justify-content:flex-start;margin:0 2px 0 -2px}.t h2{font:400 14px "Open Sans",sans-serif;margin:0 0 0 17px}
.x{width:60px;height:60px;background:#e81123;color:#fff}
.m{display:flex;margin-left:4px;background:linear-gradient(#cfcfcf,#cfcfcf) 10px 0/798px 1px no-repeat;padding-top:1px}
sheet-grid{width:796px}
.vs{width:20px;margin-left:2px;background:#f5f5f5;border-radius:10px;flex-direction:column;padding:5px 0;height:127px}
.vs i{width:10px;height:21px;border-radius:5px;background:#6f6f6f;margin:9px 0 auto}.dn{transform:rotate(180deg)}
.hs{height:21px;margin:8px 24px 0 2px;background:#f5f5f5;border-radius:10px;padding:0 4px;justify-content:space-between}
.hs i{width:676px;height:11px;border-radius:5px;background:#6f6f6f;margin:0 auto 0 5px}.lf{transform:rotate(-90deg)}.rt{transform:rotate(90deg)}`,
`<header><div class="row t">${icon('excel', 20)}<button style="margin-left:12px" aria-label="Save">${icon('saveOff')}</button><button aria-label="Undo">${icon('undo')}</button><button class="c" aria-label="Undo list">${icon('chev', 9)}</button><button aria-label="Redo">${icon('redo')}</button><button class="c" aria-label="Redo list">${icon('chev', 9)}</button><button aria-label="Edit data in Excel">${icon('sheetX')}</button><h2>Chart in Microsoft PowerPoint</h2></div><button class="x" aria-label="Close">${icon('close', 13)}</button></header>
<div class="m"><sheet-grid></sheet-grid><div class="row vs">${icon('tri', 10)}<i></i><ui-icon class="dn" name="tri" w="10"></ui-icon></div></div>
<div class="row hs"><ui-icon class="lf" name="tri" w="10"></ui-icon><i></i><ui-icon class="rt" name="tri" w="10"></ui-icon></div>`);

/* ---------- page ---------- */
define('desk-top', `:host{display:flex;flex-direction:column;height:100vh;position:relative;background:
radial-gradient(700px 600px at 100% 58%,#f5ebe3 0,#f1ece4 60%,rgba(238,235,228,0) 100%),
radial-gradient(500px 260px at 86% 94%,#f0ebdf 0,rgba(240,236,226,0) 100%),
radial-gradient(600px 180px at 20% 46%,#ebe8e8 0,rgba(236,232,232,0) 100%),
linear-gradient(180deg,#e7ecf2 0,#e6ecf0 23%,#e6eaf0 45%,#e5e8ed 65%,#e3e6eb 85%,#e3e8eb 100%)}
main{flex:1;display:flex;min-height:0}.e{flex:1;display:flex;flex-direction:column;min-width:0}
title-bar,ribbon-tabs{background:#e7ecf1}`,
`<title-bar></title-bar><ribbon-tabs></ribbon-tabs><ribbon-bar></ribbon-bar>
<main><slide-rail></slide-rail><section class="e"><slide-stage></slide-stage><notes-pane>Click to add notes</notes-pane></section></main>
<status-bar></status-bar><task-bar></task-bar><sheet-window></sheet-window>`);
</script>
</body>
</html>
